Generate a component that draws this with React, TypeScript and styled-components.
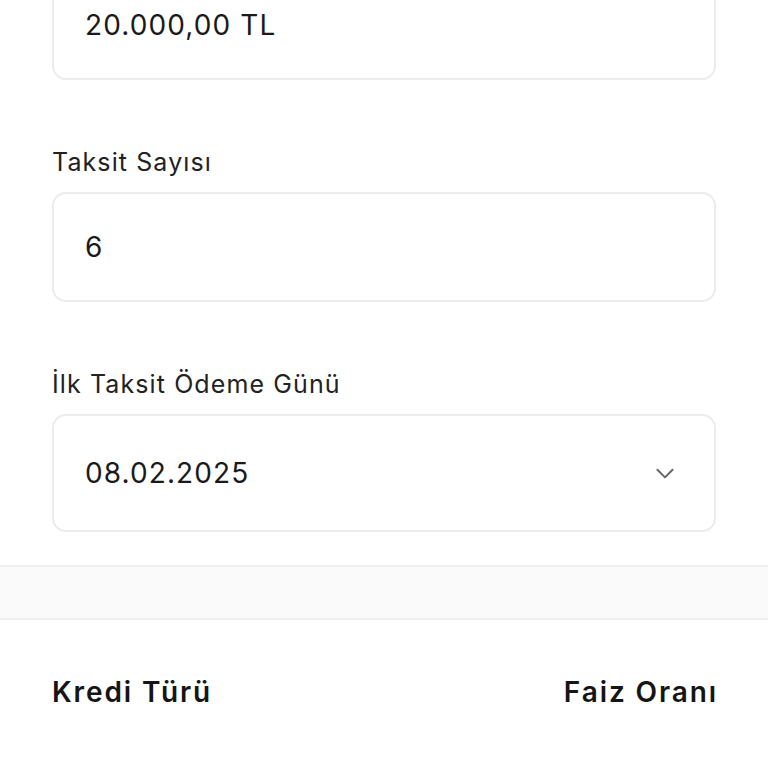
import styled, { createGlobalStyle } from 'styled-components';

const GlobalStyle = createGlobalStyle`
  html, body {
    margin: 0;
    padding: 0;
    background: #ffffff;
    overflow: hidden;
  }
  body {
    font-family: Inter, "Noto Sans", sans-serif;
    color: #1c1c1c;
  }
`;

const Page = styled.div`
  width: 768px;
  height: 768px;
  overflow: hidden;
  background: #ffffff;
`;

const Form = styled.div`
  margin-top: -30px;
  padding: 0 52px;
  display: flex;
  flex-direction: column;
`;

const Field = styled.div`
  display: flex;
  flex-direction: column;
  & + & {
    margin-top: 66px;
  }
`;

const Label = styled.div`
  font-size: 25px;
  line-height: 32px;
  color: #222222;
  margin-bottom: 14px;
  letter-spacing: 1.1px;
`;

const Input = styled.div<{ $tall?: boolean }>`
  box-sizing: border-box;
  height: ${(p) => (p.$tall ? 118 : 110)}px;
  border: 2px solid #ececec;
  border-radius: 14px;
  padding: 0 36px 0 31px;
  display: flex;
  align-items: center;
  justify-content: space-between;
  font-size: 28px;
  color: #1a1a1a;
  letter-spacing: 1.1px;
`;

const Chevron = styled.svg`
  width: 26px;
  height: 26px;
  color: #666666;
`;

const Divider = styled.div`
  margin-top: 33px;
  height: 55px;
  box-sizing: border-box;
  background: #fafafa;
  border-top: 2px solid #f0f0f0;
  border-bottom: 2px solid #efefef;
`;

const HeaderRow = styled.div`
  padding: 56px 50px 0 52px;
  display: flex;
  justify-content: space-between;
  align-items: center;
`;

const Heading = styled.div`
  font-size: 28px;
  line-height: 32px;
  font-weight: 600;
  color: #151515;
  letter-spacing: 1.9px;
`;

const App = () => {
  return (
    <Page>
      <GlobalStyle />
      <Form>
        <Field>
          <Input>20.000,00 TL</Input>
        </Field>
        <Field>
          <Label>Taksit Sayısı</Label>
          <Input>6</Input>
        </Field>
        <Field>
          <Label>İlk Taksit Ödeme Günü</Label>
          <Input $tall>
            08.02.2025
            <Chevron viewBox="0 0 24 24" fill="none" stroke="currentColor" strokeWidth="1.8" strokeLinecap="round" strokeLinejoin="round">
              <polyline points="5,9 12,16 19,9" />
            </Chevron>
          </Input>
        </Field>
      </Form>
      <Divider />
      <HeaderRow>
        <Heading>Kredi Türü</Heading>
        <Heading>Faiz Oranı</Heading>
      </HeaderRow>
    </Page>
  );
};

export default App;
